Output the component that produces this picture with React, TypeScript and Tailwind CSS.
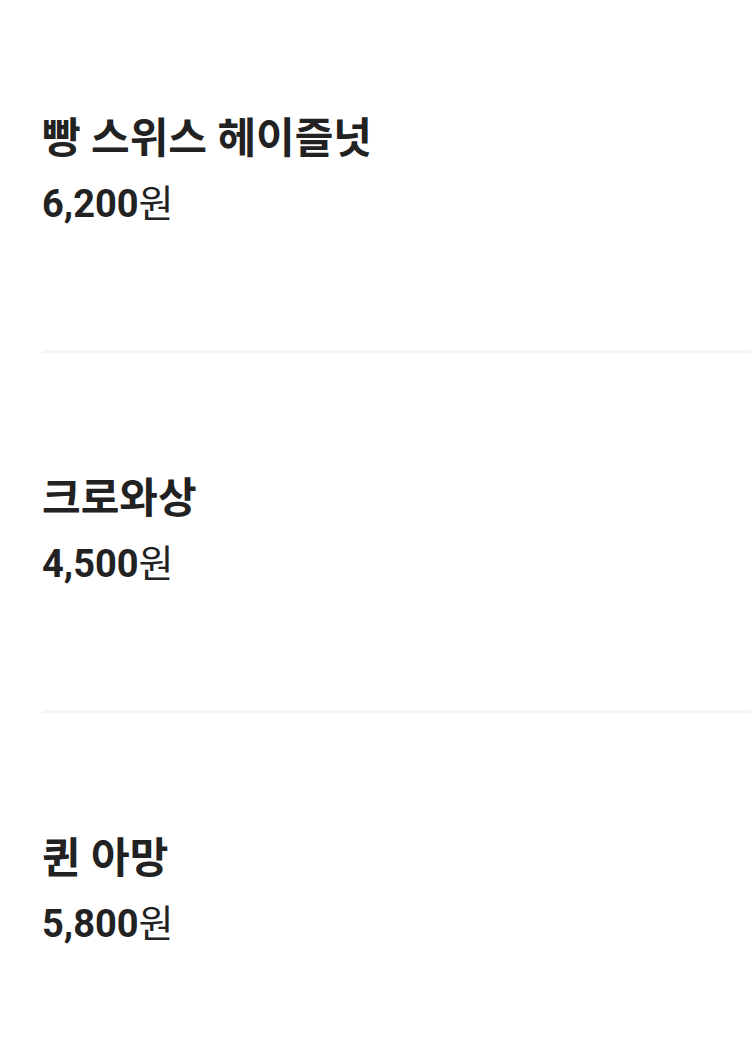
const items = [
  { name: "빵 스위스 헤이즐넛", price: "6,200" },
  { name: "크로와상", price: "4,500" },
  { name: "퀸 아망", price: "5,800" },
];

export default function App() {
  return (
    <div className="min-h-screen bg-white" style={{ fontFamily: 'Roboto, "Noto Sans CJK KR", sans-serif' }}>
      <ul className="-mt-[7px] pl-[42px]">
        {items.map((item, index) => (
          <li key={index} className="border-b-[3px] border-[#f5f5f5] pt-[122px] pb-[124px] text-[#222222]">
            <h3 className="text-[42px] leading-[48px] font-bold">{item.name}</h3>
            <p className="mt-[19px] text-[38px] leading-[44px]">
              <span className="font-bold">{item.price}</span>
              <span className="font-normal">원</span>
            </p>
          </li>
        ))}
      </ul>
    </div>
  );
}
